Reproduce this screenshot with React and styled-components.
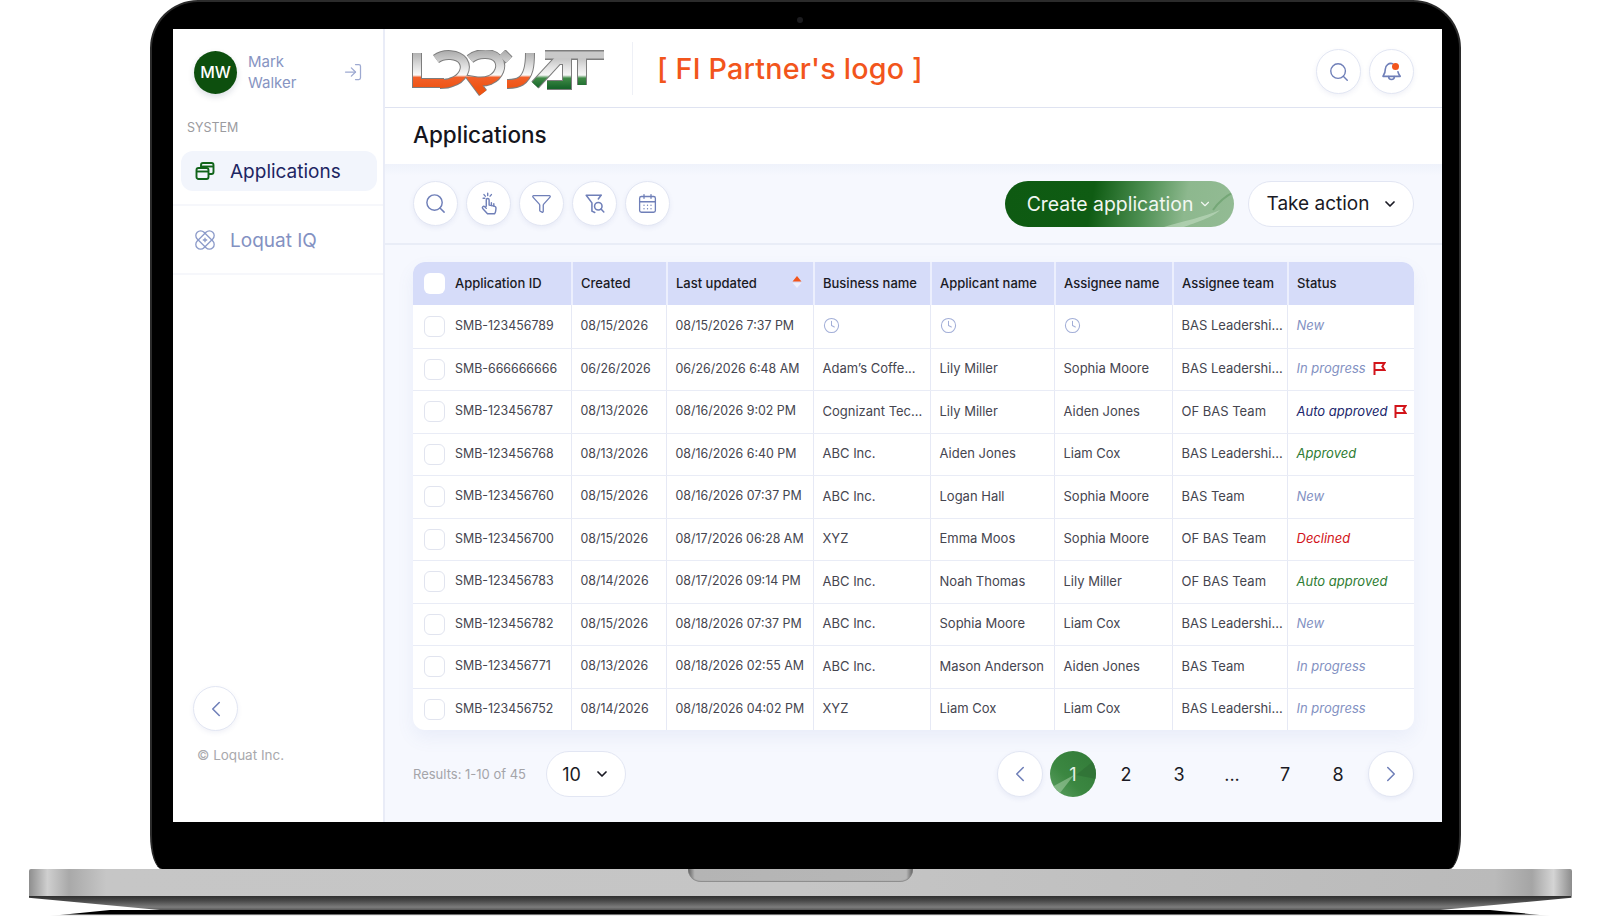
import React from "react";
import styled, { createGlobalStyle } from "styled-components";
import { Search, Filter, CalendarDays, Clock, LogIn, ChevronLeft, ChevronRight, ChevronDown } from "lucide-react";

const GlobalStyle = createGlobalStyle`
  html, body { margin: 0; padding: 0; background: #fff; }
  body { font-family: Inter, "Noto Sans", sans-serif; color: #1a1a24; }
  * { box-sizing: border-box; }
`;

const rows = [
  ["SMB-123456789", "08/15/2026", "08/15/2026 7:37 PM", null, null, null, "BAS Leadershi...", "New", "new", false],
  ["SMB-666666666", "06/26/2026", "06/26/2026 6:48 AM", "Adam’s Coffe...", "Lily Miller", "Sophia Moore", "BAS Leadershi...", "In progress", "new", true],
  ["SMB-123456787", "08/13/2026", "08/16/2026 9:02 PM", "Cognizant Tec...", "Lily Miller", "Aiden Jones", "OF BAS Team", "Auto approved", "navy", true],
  ["SMB-123456768", "08/13/2026", "08/16/2026 6:40 PM", "ABC Inc.", "Aiden Jones", "Liam Cox", "BAS Leadershi...", "Approved", "green", false],
  ["SMB-123456760", "08/15/2026", "08/16/2026 07:37 PM", "ABC Inc.", "Logan Hall", "Sophia Moore", "BAS Team", "New", "new", false],
  ["SMB-123456700", "08/15/2026", "08/17/2026 06:28 AM", "XYZ", "Emma Moos", "Sophia Moore", "OF BAS Team", "Declined", "red", false],
  ["SMB-123456783", "08/14/2026", "08/17/2026 09:14 PM", "ABC Inc.", "Noah Thomas", "Lily Miller", "OF BAS Team", "Auto approved", "green", false],
  ["SMB-123456782", "08/15/2026", "08/18/2026 07:37 PM", "ABC Inc.", "Sophia Moore", "Liam Cox", "BAS Leadershi...", "New", "new", false],
  ["SMB-123456771", "08/13/2026", "08/18/2026 02:55 AM", "ABC Inc.", "Mason Anderson", "Aiden Jones", "BAS Team", "In progress", "new", false],
  ["SMB-123456752", "08/14/2026", "08/18/2026 04:02 PM", "XYZ", "Liam Cox", "Liam Cox", "BAS Leadershi...", "In progress", "new", false],
];

const statusColors = { new: "#8391c2", navy: "#20276c", green: "#2f7d34", red: "#d2141a" };
const columns = "158px 95px 147px 117px 124px 118px 115px 127px";

const Page = styled.div`
  width: 1600px;
  height: 917px;
  overflow: hidden;
  display: flex;
  flex-direction: column;
  align-items: center;
  background: #fff;
`;

const Lid = styled.div`
  position: relative;
  width: 1311px;
  height: 869px;
  margin-left: 11px;
  padding: 29px 19px 47px 23px;
  background: #000;
  border: 2px solid #2b2b2b;
  border-bottom: none;
  border-radius: 48px 48px 12px 12px / 48px 48px 34px 34px;
`;

const Camera = styled.span`
  position: absolute;
  top: 15px;
  left: 645px;
  width: 6px;
  height: 6px;
  border-radius: 50%;
  background: #1c1c1f;
`;

const Screen = styled.div`
  display: flex;
  height: 793px;
  margin: -2px -2px 0 -2px;
  background: #fff;
  overflow: hidden;
`;

const Base = styled.div`
  position: relative;
  width: 1543px;
  height: 27px;
  border-radius: 2px 2px 0 0;
  background: linear-gradient(90deg, #8e8e8e 0, #cfcfcf 1.2%, #a9a9a9 2.6%, #c6c6c6 5%, #c5c5c5 50%, #bababa 95%, #a5a5a5 97.4%, #d4d4d4 98.8%, #8c8c8c 100%);
`;

const Notch = styled.div`
  position: absolute;
  top: 0;
  left: 659px;
  width: 225px;
  height: 13px;
  border-radius: 0 0 14px 14px;
  background: linear-gradient(90deg, #5f5f5f 0, #b4b4b4 3%, #b7b7b7 97%, #5f5f5f 100%);
  box-shadow: inset 0 -1px 1px #8a8a8a;
`;

const Foot = styled.div`
  width: 1543px;
  height: 14px;
  background: linear-gradient(180deg, #2f2f2f 0, #4a4a4a 35%, #7c7c7c 80%, #555 100%);
  clip-path: polygon(0 0, 100% 0, 100% 12%, 91.5% 100%, 8.5% 100%, 0 12%);
`;

const Shadow = styled.div`
  width: 1500px;
  height: 6px;
  background: linear-gradient(180deg, #000 0, #000 65%, #ddd 85%, #fff 100%);
  clip-path: polygon(4% 0, 96% 0, 100% 100%, 0 100%);
`;

const Sidebar = styled.aside`
  width: 212px;
  flex: none;
  display: flex;
  flex-direction: column;
  border-right: 2px solid #e9ecf7;
`;

const UserRow = styled.div`
  display: flex;
  align-items: center;
  height: 42px;
  margin: 22px 0 0 21px;
`;

const Avatar = styled.div`
  width: 43px;
  height: 43px;
  border-radius: 50%;
  flex: none;
  display: flex;
  align-items: center;
  justify-content: center;
  background: #0d4f0e;
  color: #fff;
  font-size: 16px;
  font-weight: 500;
  box-shadow: 0 3px 6px rgba(20, 40, 80, 0.15);
`;

const UserName = styled.div`
  width: 106px;
  padding-left: 11px;
  padding-right: 30px;
  font-size: 15px;
  line-height: 21px;
  color: #8794c2;
`;

const LogoutIcon = styled(LogIn)`
  width: 20px;
  height: 20px;
  color: #9da9d1;
`;

const SectionLabel = styled.div`
  margin: 27px 0 0 14px;
  font-size: 12.5px;
  line-height: 16px;
  color: #9b9b9f;
`;

const NavItem = styled.div`
  display: flex;
  align-items: center;
  gap: 15px;
  height: 40px;
  margin: ${(p) => (p.$active ? "15px 6px 13px 8px" : "14px 6px 13px 8px")};
  padding-left: 14px;
  border-radius: 12px;
  background: ${(p) => (p.$active ? "#f2f5fc" : "transparent")};
  color: ${(p) => (p.$active ? "#1d2562" : "#8391c2")};
  font-size: 19px;
`;

const NavRule = styled.div`
  height: 2px;
  background: #f6f7fb;
`;

const SidebarFoot = styled.div`
  margin: auto 0 0 20px;
  padding-bottom: 58px;
`;

const Copy = styled.div`
  margin: 15px 0 0 4px;
  font-size: 13.5px;
  line-height: 18px;
  color: #a9a9ad;
`;

const Main = styled.main`
  flex: 1;
  min-width: 0;
  display: flex;
  flex-direction: column;
  background: #f6f8fe;
`;

const TopBar = styled.header`
  display: flex;
  align-items: center;
  height: 79px;
  padding: 0 28px 0 27px;
  background: #fff;
  border-bottom: 1px solid #dfe3f1;
`;

const LogoMark = styled.svg`
  width: 192px;
  height: 48px;
  flex: none;
  margin-top: 12px;
`;

const LogoRule = styled.div`
  width: 1px;
  height: 53px;
  margin: 0 24px 0 28px;
  background: #eef0f6;
`;

const PartnerText = styled.div`
  font-size: 28.7px;
  font-weight: 500;
  color: #f2551c;
  letter-spacing: 0.2px;
`;

const RightGroup = styled.div`
  display: flex;
  gap: ${(p) => p.$gap || 8}px;
  margin-left: auto;
  margin-top: ${(p) => p.$drop || 0}px;
`;

const RoundButton = styled.button`
  position: relative;
  width: ${(p) => p.$size || 45}px;
  height: ${(p) => p.$size || 45}px;
  padding: 0;
  flex: none;
  display: flex;
  align-items: center;
  justify-content: center;
  border-radius: 50%;
  border: 1px solid #e2e6f3;
  background: #fff;
  color: #6f7fb8;
  box-shadow: 0 2px 5px rgba(60, 80, 150, 0.08);
`;

const BellDot = styled.span`
  position: absolute;
  top: 13px;
  right: 14px;
  width: 7px;
  height: 7px;
  border-radius: 50%;
  background: #f2551c;
`;

const TitleRow = styled.div`
  height: 56px;
  padding: 0 28px 3px;
  display: flex;
  align-items: center;
  background: #fff;
  font-size: 22.5px;
  font-weight: 500;
  color: #15151d;
`;

const Toolbar = styled.div`
  display: flex;
  align-items: center;
  height: 81px;
  padding: 0 28px;
  gap: 8px;
  background: linear-gradient(180deg, #eff2fb 0, #f6f8fe 12px);
  border-bottom: 2px solid #e9edf7;
`;

const CreateButton = styled.button`
  position: relative;
  overflow: hidden;
  display: flex;
  align-items: center;
  justify-content: center;
  gap: 5px;
  width: 229px;
  height: 46px;
  margin-right: 6px;
  padding: 0;
  border: none;
  border-radius: 23px;
  font: inherit;
  font-size: 19.4px;
  color: #f2f7f2;
  background: linear-gradient(100deg, #0e5a12 0, #0f5c13 38%, #4d8f52 60%, #8db88e 78%, #93bb94 100%);
`;

const Swoosh = styled.svg`
  position: absolute;
  right: 0;
  top: 0;
  width: 90px;
  height: 46px;
`;

const CreateLabel = styled.span`
  position: relative;
  display: flex;
`;

const TakeButton = styled.button`
  display: flex;
  align-items: center;
  justify-content: center;
  gap: 13px;
  width: ${(p) => p.$w}px;
  height: 46px;
  padding: 0 0 0 ${(p) => p.$shift || 0}px;
  border: 1px solid #e2e6f3;
  border-radius: 23px;
  background: #fff;
  font: inherit;
  font-size: ${(p) => p.$fs || 19}px;
  color: #1a1a24;
`;

const Content = styled.div`
  flex: 1;
  padding: 17px 28px 0;
`;

const Table = styled.div`
  width: 1001px;
  border-radius: 12px;
  background: #fff;
  overflow: hidden;
  box-shadow: 0 8px 18px rgba(90, 110, 190, 0.08);
`;

const HeadRow = styled.div`
  display: grid;
  grid-template-columns: ${columns};
  height: 43px;
  background: #d6dcf9;
  font-size: 13px;
  font-weight: 500;
  color: #1a1a24;
`;

const HeadCell = styled.div`
  display: flex;
  align-items: center;
  gap: 10px;
  padding-bottom: ${(p) => (p.$first ? 0 : 2)}px;
  padding-left: ${(p) => (p.$first ? 11 : 8)}px;
  border-left: ${(p) => (p.$first ? "none" : "2px solid #eceffd")};
`;

const HeadLabel = styled.span`
  margin-top: ${(p) => (p.$lift ? -2 : 0)}px;
`;

const BodyRow = styled.div`
  display: grid;
  grid-template-columns: ${columns};
  height: 42.5px;
  border-top: ${(p) => (p.$first ? "none" : "1px solid #e9ecf6")};
  font-size: 13px;
  color: #45454f;
`;

const Cell = styled.div`
  display: flex;
  align-items: center;
  gap: 10px;
  min-width: 0;
  white-space: nowrap;
  font-size: ${(p) => (p.$num ? "12.4px" : "inherit")};
  padding-bottom: 2px;
  padding-left: ${(p) => (p.$first ? 11 : 8.5)}px;
  border-left: ${(p) => (p.$first ? "none" : "1px solid #e6e9f5")};
`;

const Check = styled.span`
  width: 21px;
  height: 21px;
  flex: none;
  margin-top: ${(p) => (p.$head ? 0 : 2)}px;
  border-radius: 6px;
  background: #fff;
  border: ${(p) => (p.$head ? "none" : "1px solid #e1e4ef")};
`;

const SortMark = styled.svg`
  width: 10px;
  height: 14px;
  margin: -2px 11px 0 auto;
`;

const PendingIcon = styled(Clock)`
  width: 17px;
  height: 17px;
  color: #a3afd8;
`;

const Status = styled.span`
  font-style: italic;
  font-size: 13px;
  color: ${(p) => statusColors[p.$kind]};
`;

const FlagMark = styled.svg`
  width: 13px;
  height: 14px;
  flex: none;
  margin-left: -3px;
`;

const Pager = styled.div`
  display: flex;
  align-items: center;
  margin-top: 21px;
`;

const Results = styled.span`
  width: 133px;
  font-size: 13px;
  color: #a4a4a9;
`;

const PageNum = styled.div`
  position: relative;
  overflow: hidden;
  width: 46px;
  height: 46px;
  display: flex;
  align-items: center;
  justify-content: center;
  border-radius: 50%;
  font-size: 18px;
  color: ${(p) => (p.$active ? "#e8f2e8" : "#1a1a24")};
  background: ${(p) => (p.$active ? "linear-gradient(45deg, #5fa264 0, #3b8741 40%, #327a38 100%)" : "transparent")};
`;

const Facet = styled.svg`
  position: absolute;
  inset: 0;
  width: 46px;
  height: 46px;
`;

const PageLabel = styled.span`
  position: relative;
`;

function AppsIcon() {
  return (
    <svg width="20" height="20" viewBox="0 0 20 20" fill="none" stroke="#11641a" strokeWidth="1.9" strokeLinejoin="round">
      <rect x="1.5" y="7" width="12" height="11" rx="2" />
      <path d="M1.5 10.5h12" />
      <path d="M6 7V4a2 2 0 0 1 2-2h8.5a2 2 0 0 1 2 2v7a2 2 0 0 1-2 2h-3" />
      <path d="M6 5.5h12.5" />
    </svg>
  );
}

function AtomIcon() {
  return (
    <svg width="20" height="20" viewBox="0 0 20 20" fill="none" stroke="#8b9ac9" strokeWidth="1.3">
      <rect x="-1" y="5.2" width="22" height="9.6" rx="4.8" transform="rotate(45 10 10)" />
      <rect x="-1" y="5.2" width="22" height="9.6" rx="4.8" transform="rotate(-45 10 10)" />
      <path d="M10 7.8v4.4M7.8 10h4.4" />
    </svg>
  );
}

function HandIcon() {
  return (
    <svg width="22" height="24" viewBox="0 0 20 22" fill="none" stroke="#6f7fb8" strokeWidth="1.3" strokeLinecap="round" strokeLinejoin="round">
      <path d="M7.5 13V7.2a1.3 1.3 0 0 1 2.6 0V12l4.6.9c1 .2 1.8 1 1.7 2.1l-.3 2.6c-.1 1-.5 1.8-1 2.4H8.6L4.4 15.4c-.6-.6-.6-1.4-.1-1.9.6-.5 1.4-.4 2 .1L7.5 15" />
      <path d="M12.2 12.3V9.8M14.4 12.8v-2" />
      <path d="M8.8 1.2v2M5.4 2.4l1.2 1.4M12.2 2.4 11 3.8M4.6 5.8h1.6" />
    </svg>
  );
}

function FilterSearchIcon() {
  return (
    <svg width="22" height="22" viewBox="0 0 20 20" fill="none" stroke="#6f7fb8" strokeWidth="1.4" strokeLinecap="round" strokeLinejoin="round">
      <path d="M15.5 2H2l5.2 7v7.5l2.6 1.2" />
      <path d="M15.5 2 13 5.4" />
      <circle cx="13" cy="12" r="3.4" />
      <path d="m15.5 14.6 2.5 2.6" />
    </svg>
  );
}

function BellIcon() {
  return (
    <svg width="23" height="23" viewBox="0 0 20 20" fill="none" stroke="#6f7fb8" strokeWidth="1.4" strokeLinecap="round" strokeLinejoin="round">
      <path d="M11 3.2A5 5 0 0 0 4.6 8c0 4-2 5.4-2 6.2h15c-.4-.8-1.6-1.8-2-4" />
      <path d="M7.5 14.4c0 1.6 1.1 2.6 2.5 2.6s2.5-1 2.5-2.6" />
    </svg>
  );
}

const logoOrange = [
  "M5 3v30h27",
  "M24 9c8-6 22-5 27 2 5 8-1 18-11 21-4 2-9 2-12 2",
  "M58 9c7-6 22-7 28 0 5 7 1 17-8 21-5 2-10 2-16 1l9 12",
  "M90 3l7 7",
  "M118 3c0 12-1 23-9 28-3 2-8 3-14 3",
];
const logoGreen = ["M123 35 146 10h9v25h-20", "M170 8v27"];

function LogoSvg() {
  return (
    <LogoMark viewBox="0 0 192 48" fill="none">
      <defs>
        <linearGradient id="lqOrange" gradientUnits="userSpaceOnUse" x1="0" y1="0" x2="0" y2="38">
          <stop offset="0" stopColor="#a8a8a8" />
          <stop offset="0.45" stopColor="#e2e2e2" />
          <stop offset="0.66" stopColor="#fafafa" />
          <stop offset="0.72" stopColor="#f2602a" />
          <stop offset="1" stopColor="#ee5414" />
        </linearGradient>
        <linearGradient id="lqGreen" gradientUnits="userSpaceOnUse" x1="0" y1="0" x2="0" y2="38">
          <stop offset="0" stopColor="#a8a8a8" />
          <stop offset="0.45" stopColor="#e2e2e2" />
          <stop offset="0.66" stopColor="#f6f6f6" />
          <stop offset="0.74" stopColor="#3f8a46" />
          <stop offset="1" stopColor="#17652a" />
        </linearGradient>
      </defs>
      <g stroke="#7d7d7d" strokeWidth="10">
        {logoOrange.map((d) => <path key={d} d={d} />)}
        {logoGreen.map((d) => <path key={d} d={d} />)}
        <path d="M133 5h59" />
      </g>
      <g stroke="url(#lqOrange)" strokeWidth="8">
        {logoOrange.map((d) => <path key={d} d={d} />)}
      </g>
      <g stroke="url(#lqGreen)" strokeWidth="8">
        {logoGreen.map((d) => <path key={d} d={d} />)}
      </g>
      <path d="M133 5h59" stroke="#c9c9c9" strokeWidth="7" />
    </LogoMark>
  );
}

function App() {
  return (
    <Page>
      <GlobalStyle />
      <Lid>
        <Camera />
        <Screen>
          <Sidebar>
            <UserRow>
              <Avatar>MW</Avatar>
              <UserName>Mark Walker</UserName>
              <LogoutIcon strokeWidth={1.5} />
            </UserRow>
            <SectionLabel>SYSTEM</SectionLabel>
            <NavItem $active>
              <AppsIcon />
              Applications
            </NavItem>
            <NavRule />
            <NavItem>
              <AtomIcon />
              Loquat IQ
            </NavItem>
            <NavRule />
            <SidebarFoot>
              <RoundButton $size={45}>
                <ChevronLeft size={26} strokeWidth={1.4} />
              </RoundButton>
              <Copy>© Loquat Inc.</Copy>
            </SidebarFoot>
          </Sidebar>
          <Main>
            <TopBar>
              <LogoSvg />
              <LogoRule />
              <PartnerText>[ FI Partner's logo ]</PartnerText>
              <RightGroup $drop={7}>
                <RoundButton>
                  <Search size={22} strokeWidth={1.5} />
                </RoundButton>
                <RoundButton>
                  <BellIcon />
                  <BellDot />
                </RoundButton>
              </RightGroup>
            </TopBar>
            <TitleRow>Applications</TitleRow>
            <Toolbar>
              <RoundButton><Search size={23} strokeWidth={1.5} /></RoundButton>
              <RoundButton><HandIcon /></RoundButton>
              <RoundButton><Filter size={21} strokeWidth={1.5} /></RoundButton>
              <RoundButton><FilterSearchIcon /></RoundButton>
              <RoundButton><CalendarDays size={21} strokeWidth={1.5} /></RoundButton>
              <RightGroup $gap={8}>
                <CreateButton>
                  <Swoosh viewBox="0 0 90 46" fill="none">
                    <path d="M20 46C40 40 60 36 76 29 70 36 50 42 40 46Z" fill="#c2dcc1" opacity="0.6" />
                    <path d="M69 29C74 22 82 15 90 11" stroke="#6ea271" strokeWidth="2" opacity="0.8" />
                  </Swoosh>
                  <CreateLabel>Create application</CreateLabel>
                  <CreateLabel><ChevronDown size={14} strokeWidth={2} /></CreateLabel>
                </CreateButton>
                <TakeButton $w={166} $shift={3}>
                  Take action
                  <ChevronDown size={16} strokeWidth={2.6} />
                </TakeButton>
              </RightGroup>
            </Toolbar>
            <Content>
              <Table>
                <HeadRow>
                  <HeadCell $first><Check $head /><HeadLabel $lift>Application ID</HeadLabel></HeadCell>
                  <HeadCell>Created</HeadCell>
                  <HeadCell>
                    Last updated
                    <SortMark viewBox="0 0 10 14">
                      <path d="M5 1l4.5 5.5h-9z" fill="#f2551c" />
                      <path d="M5 13 .5 7.8h9z" fill="#eef0fc" />
                    </SortMark>
                  </HeadCell>
                  <HeadCell>Business name</HeadCell>
                  <HeadCell>Applicant name</HeadCell>
                  <HeadCell>Assignee name</HeadCell>
                  <HeadCell>Assignee team</HeadCell>
                  <HeadCell>Status</HeadCell>
                </HeadRow>
                {rows.map((r, i) => (
                  <BodyRow key={r[0]} $first={i === 0}>
                    <Cell $first $num><Check />{r[0]}</Cell>
                    <Cell $num>{r[1]}</Cell>
                    <Cell $num>{r[2]}</Cell>
                    <Cell>{r[3] || <PendingIcon strokeWidth={1.5} />}</Cell>
                    <Cell>{r[4] || <PendingIcon strokeWidth={1.5} />}</Cell>
                    <Cell>{r[5] || <PendingIcon strokeWidth={1.5} />}</Cell>
                    <Cell>{r[6]}</Cell>
                    <Cell>
                      <Status $kind={r[8]}>{r[7]}</Status>
                      {r[9] && (
                        <FlagMark viewBox="0 0 13 14" fill="none" stroke="#d2141a" strokeWidth="2">
                          <path d="M1.5 14V2h10l-2.2 3.4L11.5 9h-10" />
                        </FlagMark>
                      )}
                    </Cell>
                  </BodyRow>
                ))}
              </Table>
              <Pager>
                <Results>Results: 1-10 of 45</Results>
                <TakeButton $w={80} $fs={18}>
                  10
                  <ChevronDown size={16} strokeWidth={2.6} />
                </TakeButton>
                <RightGroup $gap={7}>
                  <RoundButton $size={46}><ChevronLeft size={26} strokeWidth={1.4} /></RoundButton>
                  <PageNum $active>
                    <Facet viewBox="0 0 46 46" fill="none">
                      <path d="M46 8 26 24l20 4Z" fill="#2f6f35" opacity="0.7" />
                      <path d="M2 36 24 24 10 42Z" fill="#a8cfa8" opacity="0.55" />
                    </Facet>
                    <PageLabel>1</PageLabel>
                  </PageNum>
                  {["2", "3", "...", "7", "8"].map((n) => (
                    <PageNum key={n}>{n}</PageNum>
                  ))}
                  <RoundButton $size={46}><ChevronRight size={26} strokeWidth={1.4} /></RoundButton>
                </RightGroup>
              </Pager>
            </Content>
          </Main>
        </Screen>
      </Lid>
      <Base><Notch /></Base>
      <Foot />
      <Shadow />
    </Page>
  );
}

export default App;
